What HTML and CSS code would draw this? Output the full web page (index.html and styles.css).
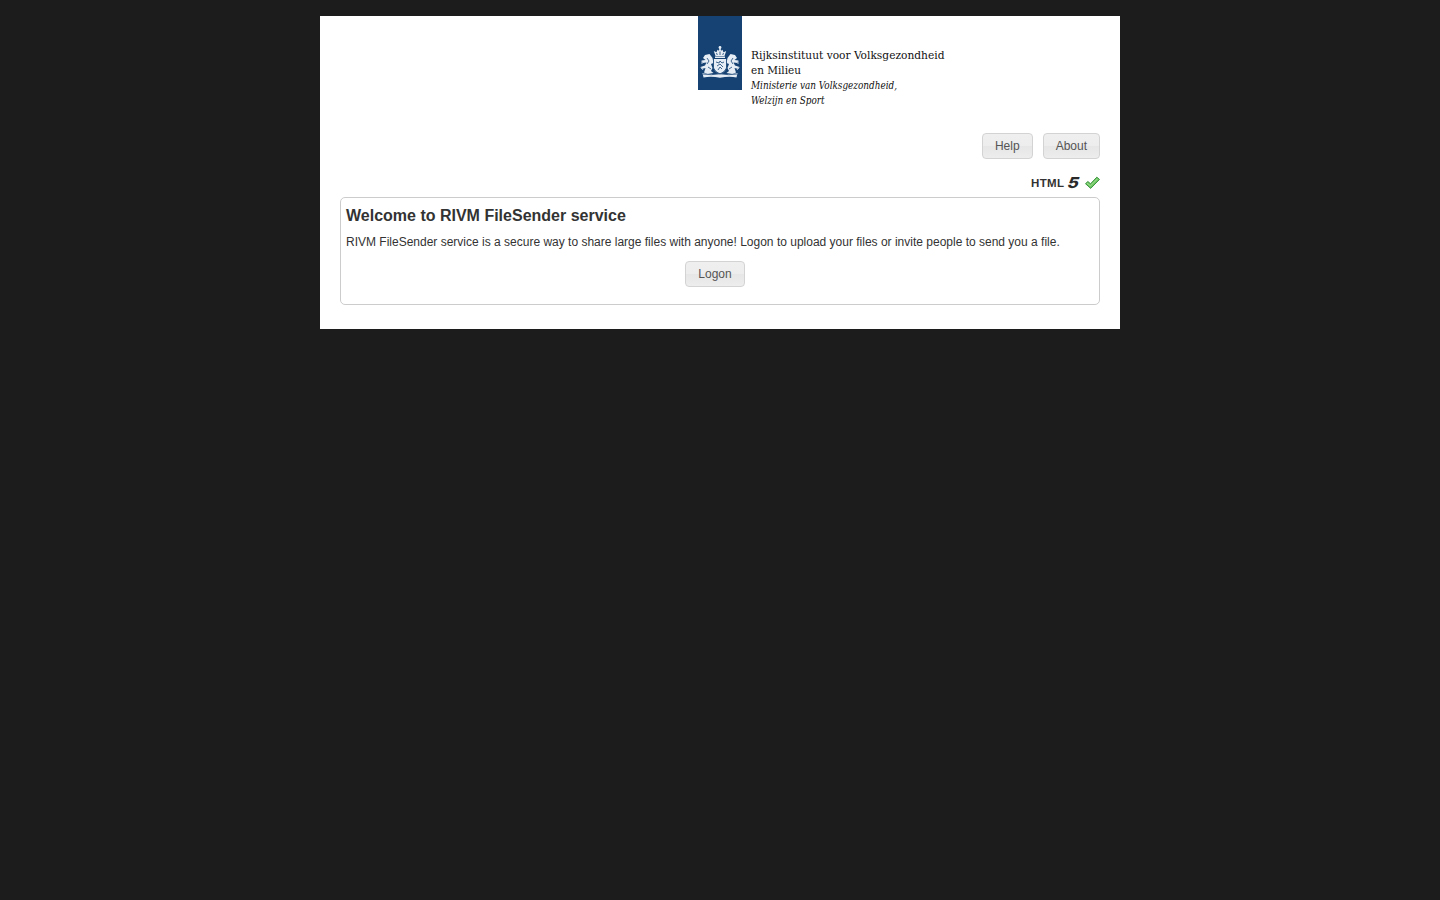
FILE: index.html
```html
<!DOCTYPE html>
<html lang="en">
<head>
<meta charset="utf-8">
<title>FileSender</title>
<link rel="stylesheet" href="styles.css">
</head>
<body>
<div class="wrap">
  <header class="header">
    <svg class="logo" width="260" height="100" viewBox="0 0 260 100" role="img" aria-label="Rijksinstituut voor Volksgezondheid en Milieu">
      <rect width="44" height="74" fill="#154273"/>
      <g fill="#e6edf5">
        <path d="M17.500 40l-1.700-5 2.700 1.200 1-2.400 1.500 1 .5-2.800h1l.5 2.800 1.500-1 1 2.400 2.700-1.200-1.700 5z"/>
        <circle cx="22" cy="31.500" r="1.400"/>
        <path d="M17 40.500h10v1.500H17z"/>
        <path d="M15.500 43h13v9q-1.500 4.500-6.500 6-5-1.500-6.500-6z"/>
        <path d="M14.500 42l-3-4-4.500 1-2 3 2.500 2-4 .5 1 2.500 4-.5-1.500 3-4.500 1.500 1 2 4-1-1.500 4.500 3.500 1.500 6-1-2.500-2 1.500-3-1.500-4 2.500-1z"/>
        <path d="M29.500 42l3-4 4.500 1 2 3-2.500 2 4 .5-1 2.500-4-.5 1.500 3 4.500 1.500-1 2-4-1 1.500 4.500-3.500 1.500-6-1 2.500-2-1.500-3 1.500-4-2.500-1z"/>
        <path d="M4.500 57q8.500 2 17.500 .5 9 1.500 17.500-.5l-1 4.500q-7-1.500-16.500 .2-9-1.700-16.500-.2z"/>
      </g>
      <g fill="none" stroke="#154273" stroke-width=".8">
        <path d="M18 46l3 1 1-2 2 2 2-1M19 50l3-2 3 3M20 54l2-3 2 2M9 42l2 3-2 3M35 42l-2 3 2 3M10 51l3 2M34 51l-3 2M5 58q8 1.500 17-.2 9 1.700 17 .2M15.500 43v9q1.500 4 6.500 6 5-2 6.500-6v-9M18.500 37l.8 2M22 35.500V39M25.500 37l-.8 2"/>
      </g>
      <path d="M4 45v3M3 51l2 3M40 45v3M41 51l-2 3" stroke="#b9c8da" stroke-width="1"/>
      <g class="logo-text">
        <text x="53" y="43.300" textLength="193.500" lengthAdjust="spacingAndGlyphs">Rijksinstituut voor Volksgezondheid</text>
        <text x="53" y="58.300" textLength="50" lengthAdjust="spacingAndGlyphs">en Milieu</text>
        <text class="ministry" x="53" y="73.300" textLength="146" lengthAdjust="spacingAndGlyphs">Ministerie van Volksgezondheid,</text>
        <text class="ministry" x="53" y="88.300" textLength="73.500" lengthAdjust="spacingAndGlyphs">Welzijn en Sport</text>
      </g>
    </svg>
  </header>
  <nav class="menu">
    <a class="button">Help</a>
    <a class="button">About</a>
  </nav>
  <div class="support">
    <svg class="html5" width="70" height="18" viewBox="0 0 70 18">
      <text class="html" x="1" y="14" textLength="33">HTML</text>
      <text class="five" transform="translate(36.300 14.500) skewX(-18) scale(1.150 1)">5</text>
      <path d="M55.500 10.700l2.400-2.200 2.600 2.300 6.300-6.600 2.700 2.200-8.800 9z" fill="#6cc662" stroke="#3c9440" stroke-width="1" stroke-linejoin="round"/>
      <path d="M57 10.200l3.500 2.600 7-7" fill="none" stroke="#a3df91" stroke-width="1"/>
    </svg>
  </div>
  <main class="box">
    <h1>Welcome to RIVM FileSender service</h1>
    <p>RIVM FileSender service is a secure way to share large files with anyone! Logon to upload your files or invite people to send you a file.</p>
    <div class="actions"><a class="button">Logon</a></div>
  </main>
</div>
</body>
</html>
```
FILE: styles.css
```css
html { min-height: 100%; background: #1c1c1c; }
body { margin: 0; padding-top: 16px; font-family: "Liberation Sans", Arial, sans-serif; font-size: 12px; color: #333; }
.wrap { box-sizing: border-box; width: 800px; height: 313px; margin: 0 auto; padding: 0 20px; background: #fff; }
.header { height: 117px; padding-left: 358px; }
.logo { display: block; }
.logo-text { font-family: "DejaVu Serif Condensed", "DejaVu Serif", serif; font-stretch: condensed; font-size: 11.7px; fill: #111; }
.ministry { font-style: italic; }
.menu { display: flex; justify-content: flex-end; gap: 10px; }
.button { box-sizing: border-box; height: 26px; padding: 0 12px; border: 1px solid #d3d3d3; border-radius: 4px; background: linear-gradient(#efefef 0, #ededed 50%, #e6e6e6 51%, #ededed 100%); color: #555; line-height: 24px; }
.support { box-sizing: border-box; display: flex; justify-content: flex-end; height: 38px; padding-top: 14px; }
.html5 { overflow: visible; }
.html { font: bold 11.5px "Liberation Sans", sans-serif; fill: #333; }
.five { font: 800 15px Inter, sans-serif; fill: #2a2a2a; }
.box { box-sizing: border-box; height: 108px; padding: 8px 5px 0; border: 1px solid #ccc; border-radius: 5px; }
h1 { margin: 0; font-size: 16px; line-height: 19px; }
p { margin: 10px 0 12px; line-height: 14px; white-space: nowrap; }
.actions { display: flex; justify-content: center; padding-right: 10px; }
```
